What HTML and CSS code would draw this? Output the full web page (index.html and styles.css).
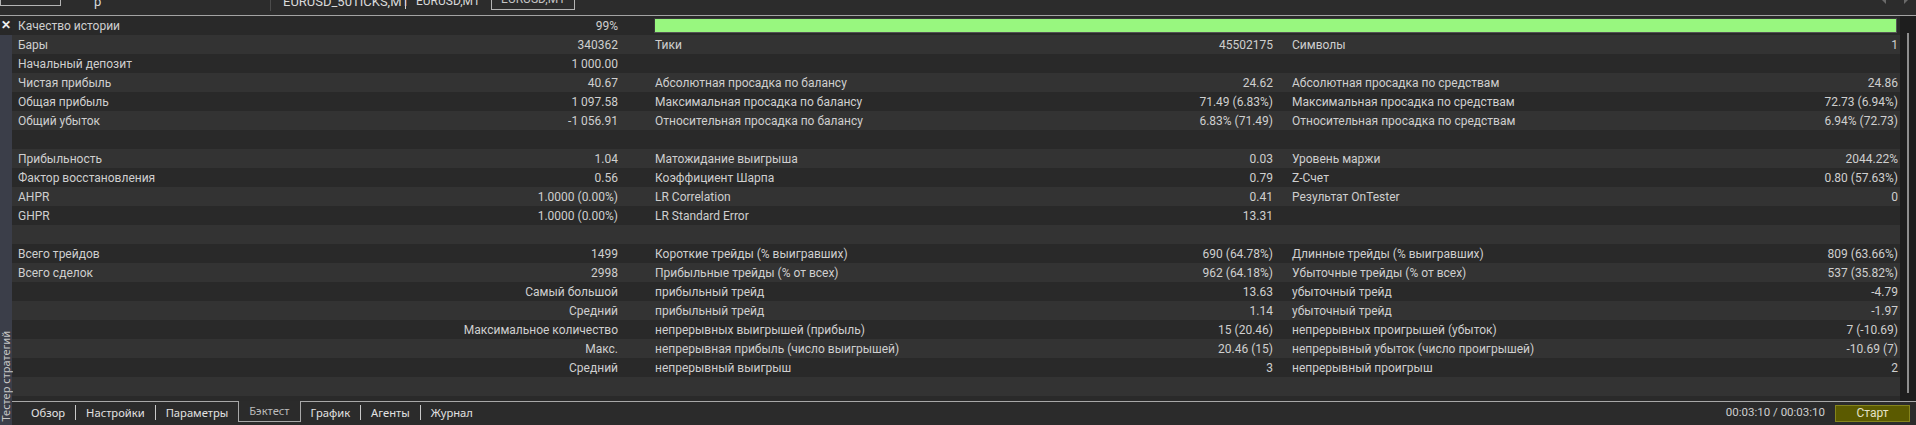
FILE: index.html
```html
<!DOCTYPE html>
<html lang="ru">
<head>
  <meta charset="UTF-8">
  <title>Тестер стратегий</title>
  <link rel="stylesheet" href="styles.css">
</head>
<body>

  <div class="topbar">
    <span class="tb-btn"></span>
    <span class="tb-text tb-r">р</span>
    <span class="tb-div"></span>
    <span class="tb-text tb-sym1">EURUSD_50TICKS,M1</span>
    <span class="tb-sep"></span>
    <span class="tb-text tb-sym2">EURUSD,M1</span>
    <span class="tb-box">EURUSD,M1</span>
    <svg class="tb-arrows" width="26" height="4" viewBox="0 0 26 4">
      <path d="M0 0 L4 0 L4 4 Z" fill="#6a6a6a"/>
      <path d="M22 0 L26 0 L22 4 Z" fill="#6a6a6a"/>
    </svg>
  </div>

  <div class="main">
    <aside class="side">
      <div class="close">✕</div>
      <div class="side-title">Тестер стратегий</div>
    </aside>

    <div class="panel">
      <div class="report-wrap">
        <div class="report">
          <div class="row">
            <div class="cell"><span>Качество истории</span><span>99%</span></div>
            <div class="quality"></div>
          </div>
          <div class="row">
            <div class="cell"><span>Бары</span><span>340362</span></div>
            <div class="cell"><span>Тики</span><span>45502175</span></div>
            <div class="cell"><span>Символы</span><span>1</span></div>
          </div>
          <div class="row">
            <div class="cell"><span>Начальный депозит</span><span>1 000.00</span></div>
            <div class="cell"></div>
            <div class="cell"></div>
          </div>
          <div class="row">
            <div class="cell"><span>Чистая прибыль</span><span>40.67</span></div>
            <div class="cell"><span>Абсолютная просадка по балансу</span><span>24.62</span></div>
            <div class="cell"><span>Абсолютная просадка по средствам</span><span>24.86</span></div>
          </div>
          <div class="row">
            <div class="cell"><span>Общая прибыль</span><span>1 097.58</span></div>
            <div class="cell"><span>Максимальная просадка по балансу</span><span>71.49 (6.83%)</span></div>
            <div class="cell"><span>Максимальная просадка по средствам</span><span>72.73 (6.94%)</span></div>
          </div>
          <div class="row">
            <div class="cell"><span>Общий убыток</span><span>-1 056.91</span></div>
            <div class="cell"><span>Относительная просадка по балансу</span><span>6.83% (71.49)</span></div>
            <div class="cell"><span>Относительная просадка по средствам</span><span>6.94% (72.73)</span></div>
          </div>
          <div class="row"></div>
          <div class="row">
            <div class="cell"><span>Прибыльность</span><span>1.04</span></div>
            <div class="cell"><span>Матожидание выигрыша</span><span>0.03</span></div>
            <div class="cell"><span>Уровень маржи</span><span>2044.22%</span></div>
          </div>
          <div class="row">
            <div class="cell"><span>Фактор восстановления</span><span>0.56</span></div>
            <div class="cell"><span>Коэффициент Шарпа</span><span>0.79</span></div>
            <div class="cell"><span>Z-Счет</span><span>0.80 (57.63%)</span></div>
          </div>
          <div class="row">
            <div class="cell"><span>AHPR</span><span>1.0000 (0.00%)</span></div>
            <div class="cell"><span>LR Correlation</span><span>0.41</span></div>
            <div class="cell"><span>Результат OnTester</span><span>0</span></div>
          </div>
          <div class="row">
            <div class="cell"><span>GHPR</span><span>1.0000 (0.00%)</span></div>
            <div class="cell"><span>LR Standard Error</span><span>13.31</span></div>
            <div class="cell"></div>
          </div>
          <div class="row"></div>
          <div class="row">
            <div class="cell"><span>Всего трейдов</span><span>1499</span></div>
            <div class="cell"><span>Короткие трейды (% выигравших)</span><span>690 (64.78%)</span></div>
            <div class="cell"><span>Длинные трейды (% выигравших)</span><span>809 (63.66%)</span></div>
          </div>
          <div class="row">
            <div class="cell"><span>Всего сделок</span><span>2998</span></div>
            <div class="cell"><span>Прибыльные трейды (% от всех)</span><span>962 (64.18%)</span></div>
            <div class="cell"><span>Убыточные трейды (% от всех)</span><span>537 (35.82%)</span></div>
          </div>
          <div class="row">
            <div class="cell right"><span>Самый большой</span></div>
            <div class="cell"><span>прибыльный трейд</span><span>13.63</span></div>
            <div class="cell"><span>убыточный трейд</span><span>-4.79</span></div>
          </div>
          <div class="row">
            <div class="cell right"><span>Средний</span></div>
            <div class="cell"><span>прибыльный трейд</span><span>1.14</span></div>
            <div class="cell"><span>убыточный трейд</span><span>-1.97</span></div>
          </div>
          <div class="row">
            <div class="cell right"><span>Максимальное количество</span></div>
            <div class="cell"><span>непрерывных выигрышей (прибыль)</span><span>15 (20.46)</span></div>
            <div class="cell"><span>непрерывных проигрышей (убыток)</span><span>7 (-10.69)</span></div>
          </div>
          <div class="row">
            <div class="cell right"><span>Макс.</span></div>
            <div class="cell"><span>непрерывная прибыль (число выигрышей)</span><span>20.46 (15)</span></div>
            <div class="cell"><span>непрерывный убыток (число проигрышей)</span><span>-10.69 (7)</span></div>
          </div>
          <div class="row">
            <div class="cell right"><span>Средний</span></div>
            <div class="cell"><span>непрерывный выигрыш</span><span>3</span></div>
            <div class="cell"><span>непрерывный проигрыш</span><span>2</span></div>
          </div>
          <div class="row"></div>
        </div>
        <div class="scroll"><div class="thumb"></div></div>
      </div>

      <div class="tabs">
        <span class="tab">Обзор</span>
        <span class="tab sep">Настройки</span>
        <span class="tab sep">Параметры</span>
        <span class="tab active">Бэктест</span>
        <span class="tab">График</span>
        <span class="tab sep">Агенты</span>
        <span class="tab sep">Журнал</span>
        <span class="timer">00:03:10 / 00:03:10</span>
        <button class="start">Старт</button>
      </div>
    </div>
  </div>

</body>
</html>
```

FILE: styles.css
```css
body {
  margin: 0;
  width: 1916px;
  height: 425px;
  overflow: hidden;
  background: #2a2a2a;
  font-family: Roboto, 'Liberation Sans', sans-serif;
  font-size: 12px;
  color: #cfcfcf;
}

/* top strip, mostly scrolled out of view */
.topbar {
  display: flex;
  align-items: flex-start;
  height: 15px;
  overflow: hidden;
  background: #2c2c2c;
  border-bottom: 1px solid #a3a3a3;
}

.tb-btn {
  width: 61px;
  height: 24px;
  margin-top: -18px;
  border: 1px solid #b4b4b4;
  box-sizing: border-box;
}

.tb-text {
  font-size: 13px;
  line-height: 15px;
  margin-top: -6px;
  color: #dadada;
  white-space: nowrap;
}

.tb-r {
  margin-left: 33px;
  width: 176px;
}

.tb-div {
  width: 1px;
  height: 11px;
  background: #4c4c4c;
}

.tb-sym1 {
  margin-left: 12px;
  width: 122px;
}

.tb-sep {
  width: 1px;
  height: 9px;
  background: #cfcfcf;
}

.tb-sym2 {
  margin-left: 10px;
  width: 75px;
  font-size: 12px;
}

.tb-box {
  width: 84px;
  height: 22px;
  margin-top: -12px;
  border: 1px solid #b4b4b4;
  box-sizing: border-box;
  text-align: center;
  font-size: 12px;
  line-height: 20px;
  color: #c4c4c4;
}

.tb-arrows {
  margin-left: auto;
  margin-right: 8px;
}

.main {
  display: flex;
  height: 409px;
}

.side {
  width: 12px;
  display: flex;
  flex-direction: column;
  background: #3b3e49;
}

.close {
  height: 19px;
  background: #282828;
  color: #f0f0f0;
  font-size: 12px;
  font-weight: bold;
  line-height: 18px;
  text-align: center;
}

.side-title {
  margin-top: auto;
  margin-bottom: 3px;
  writing-mode: vertical-rl;
  transform: rotate(180deg);
  font-family: 'Noto Sans', sans-serif;
  font-size: 11px;
  line-height: 12px;
  color: #c6c6c6;
  white-space: nowrap;
}

.panel {
  flex: 1;
  display: flex;
  flex-direction: column;
}

.report-wrap {
  display: flex;
  height: 385px;
}

.report {
  flex: 1;
}

.row {
  display: grid;
  grid-template-columns: 637px 637px 1fr;
  height: 19px;
  line-height: 20px;
}

.row:nth-child(odd) {
  background: #292929;
}

.row:nth-child(even) {
  background: #333333;
}

.cell {
  display: flex;
  justify-content: space-between;
  padding: 0 31px 0 6px;
  white-space: nowrap;
}

.cell:nth-child(2) {
  padding-right: 13px;
}

.cell:nth-child(3) {
  padding-right: 2px;
}

.cell.right {
  justify-content: flex-end;
}

.quality {
  grid-column: 2 / 4;
  height: 15px;
  margin: 2px 3px 0 5px;
  box-sizing: border-box;
  background: #98f77f;
  border: 1px solid #555;
  border-top-color: #3a3a3a;
  border-left-color: #3a3a3a;
}

.scroll {
  width: 16px;
  background: #1e1e1e;
}

.thumb {
  width: 2px;
  height: 360px;
  margin: 17px 0 0 7px;
  background: #8e8e8e;
}

.tabs {
  display: flex;
  align-items: center;
  height: 20px;
  padding: 0 0 3px 9px;
  border-top: 1px solid #a8a8a8;
  background: #2b2b2b;
  font-family: 'Noto Sans', sans-serif;
  font-size: 11.2px;
}

.tab {
  padding: 0 10px;
  height: 15px;
  line-height: 15px;
  color: #e2e2e2;
}

.tab.sep {
  border-left: 1px solid #c8c8c8;
}

.tab.active {
  align-self: flex-start;
  height: 20px;
  line-height: 20px;
  margin-top: -1px;
  background: #2b2b2b;
  border: 1px solid #a8a8a8;
  border-top: none;
  color: #bcbcbc;
}

.timer {
  margin-left: auto;
  font-family: Roboto, sans-serif;
  font-size: 11.5px;
  color: #cfcfcf;
}

.start {
  margin: 2px 6px 0 10px;
  width: 75px;
  height: 17px;
  padding: 0;
  background: #5b5a00;
  border: 1px solid #85841c;
  color: #e4e2c8;
  font-family: Roboto, sans-serif;
  font-size: 12px;
  line-height: 15px;
}
```
